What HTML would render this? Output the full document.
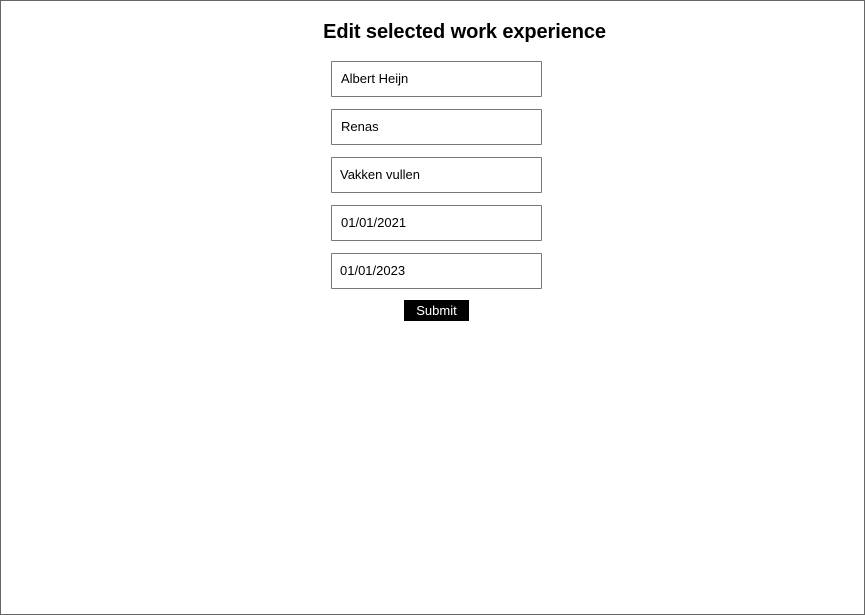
<!DOCTYPE html>
<html><head><style>
html,body{margin:0;padding:0;}
body{width:865px;height:615px;position:relative;background:#fff;font-family:"Liberation Sans",sans-serif;overflow:hidden;}
.frame{position:absolute;left:0;top:0;width:863px;height:613px;border:1px solid #666;}
h1{position:absolute;left:0;width:929px;top:21px;margin:0;text-align:center;font-size:20px;font-weight:bold;color:#000;letter-spacing:-0.1px;}
.in{position:absolute;left:331px;width:209px;height:34px;border:1px solid #777;border-radius:1px;font-size:13px;line-height:34px;color:#000;box-sizing:content-box;}
.btn{position:absolute;left:404px;top:300px;width:65px;height:21px;background:#000;color:#fff;font-size:13px;line-height:21px;text-align:center;}
</style></head><body>
<div class="frame"></div>
<h1>Edit selected work experience</h1>
<div class="in" style="top:61px"><span style="margin-left:9px">Albert Heijn</span></div>
<div class="in" style="top:109px"><span style="margin-left:9px">Renas</span></div>
<div class="in" style="top:157px"><span style="margin-left:8px">Vakken vullen</span></div>
<div class="in" style="top:205px"><span style="margin-left:9px">01/01/2021</span></div>
<div class="in" style="top:253px"><span style="margin-left:8px">01/01/2023</span></div>
<div class="btn">Submit</div>
</body></html>
